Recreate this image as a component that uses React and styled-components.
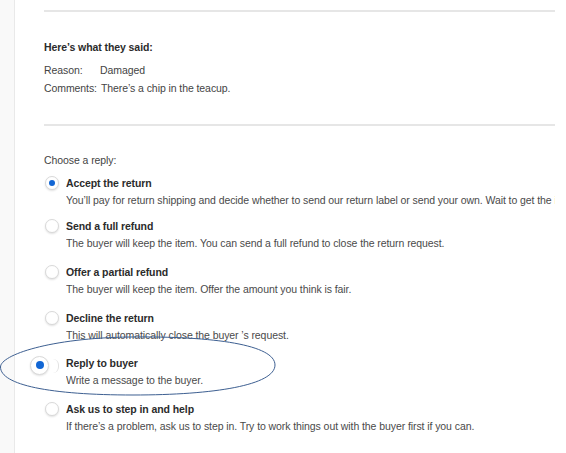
import styled, { createGlobalStyle } from "styled-components";

const GlobalStyle = createGlobalStyle`
  html, body {
    margin: 0;
    padding: 0;
    background: #ffffff;
  }
  body {
    font-family: "Liberation Sans", Arial, sans-serif;
    font-size: 10.5px;
    letter-spacing: -0.08px;
    color: #333333;
  }
`;

const Page = styled.div`
  display: flex;
  width: 566px;
  height: 453px;
  overflow: hidden;
  position: relative;
`;

const SideStrip = styled.div`
  width: 14px;
  flex-shrink: 0;
  background: #f9f9f9;
  border-right: 1px solid #e9e9e9;
`;

const Main = styled.div`
  flex: 1;
  min-width: 0;
  padding: 10px 11px 0 29px;
`;

const Divider = styled.hr`
  margin: 0;
  border: none;
  border-top: 2px solid #e6e6e6;
`;

const Said = styled.section`
  padding: 26px 0 27px;
`;

const Heading = styled.div`
  font-weight: bold;
  line-height: 18px;
  color: #2b2b2b;
  margin-bottom: 5px;
`;

const InfoRow = styled.div`
  display: flex;
  line-height: 18px;
  color: #444;
`;

const InfoLabel = styled.span`
  width: ${(p) => p.width || 56}px;
  flex-shrink: 0;
`;

const Replies = styled.section`
  padding-top: 25px;
`;

const Prompt = styled.div`
  line-height: 18px;
  color: #444;
  margin-bottom: 5px;
`;

const Option = styled.div`
  display: flex;
  align-items: flex-start;
  margin-bottom: ${(p) => p.gap}px;
  margin-left: ${(p) => (p.big ? "-12px" : "0")};
`;

const RadioCell = styled.div`
  width: ${(p) => (p.big ? "34px" : "22px")};
  height: 18px;
  flex-shrink: 0;
  display: flex;
  align-items: center;
  justify-content: flex-start;
  position: relative;
`;

const Radio = styled.span`
  box-sizing: border-box;
  flex-shrink: 0;
  width: ${(p) => (p.big ? "19px" : "14px")};
  height: ${(p) => (p.big ? "19px" : "14px")};
  margin-left: ${(p) => (p.big ? "-2px" : "1px")};
  margin-top: ${(p) => (p.big ? "4px" : "0")};
  border-radius: 50%;
  border: 1px solid #d9d9d9;
  background: #fff;
  box-shadow: 0 1px 2px rgba(0, 0, 0, 0.12);
  display: flex;
  align-items: center;
  justify-content: center;

  &::after {
    content: "";
    width: ${(p) => (p.big ? "8px" : "6px")};
    height: ${(p) => (p.big ? "8px" : "6px")};
    border-radius: 50%;
    background: #1266d4;
    display: ${(p) => (p.checked ? "block" : "none")};
  }
`;

const Ghost = styled.span`
  position: absolute;
  left: 21px;
  top: 5px;
  width: 5px;
  height: 14px;
  border-right: 1px solid #e2e2e2;
  border-radius: 0 10px 10px 0;
`;

const OptionText = styled.div`
  flex: 1;
  min-width: 0;
  overflow: hidden;
  display: flex;
  flex-direction: column;
  white-space: nowrap;
`;

const Title = styled.div`
  font-weight: bold;
  line-height: 18px;
  color: #2b2b2b;
`;

const Desc = styled.div`
  line-height: 17px;
  color: #4a4a4a;
`;

const Highlight = styled.svg`
  position: absolute;
  left: 0;
  top: 0;
  pointer-events: none;
`;

const options = [
  {
    title: "Accept the return",
    desc: "You’ll pay for return shipping and decide whether to send our return label or send your own. Wait to get the item back",
    checked: true,
    gap: 8,
  },
  {
    title: "Send a full refund",
    desc: "The buyer will keep the item. You can send a full refund to close the return request.",
    gap: 11,
  },
  {
    title: "Offer a partial refund",
    desc: "The buyer will keep the item. Offer the amount you think is fair.",
    gap: 11,
  },
  {
    title: "Decline the return",
    desc: "This will automatically close the buyer ’s request.",
    gap: 10,
  },
  {
    title: "Reply to buyer",
    desc: "Write a message to the buyer.",
    checked: true,
    big: true,
    gap: 11,
  },
  {
    title: "Ask us to step in and help",
    desc: "If there’s a problem, ask us to step in. Try to work things out with the buyer first if you can.",
    gap: 0,
  },
];

export default function App() {
  return (
    <>
      <GlobalStyle />
      <Page>
        <SideStrip />
        <Main>
          <Divider />
          <Said>
            <Heading>Here’s what they said:</Heading>
            <InfoRow>
              <InfoLabel>Reason:</InfoLabel>
              <span>Damaged</span>
            </InfoRow>
            <InfoRow>
              <InfoLabel width={57}>Comments:</InfoLabel>
              <span>There’s a chip in the teacup.</span>
            </InfoRow>
          </Said>
          <Divider />
          <Replies>
            <Prompt>Choose a reply:</Prompt>
            {options.map((o) => (
              <Option key={o.title} big={o.big} gap={o.gap}>
                <RadioCell big={o.big}>
                  <Radio checked={o.checked} big={o.big} />
                  {o.big && <Ghost />}
                </RadioCell>
                <OptionText>
                  <Title>{o.title}</Title>
                  <Desc>{o.desc}</Desc>
                </OptionText>
              </Option>
            ))}
          </Replies>
        </Main>
        <Highlight width="566" height="453" viewBox="0 0 566 453">
          <path
            d="M 0.5 367 C 0.5 355 50 338 130 337 C 215 336 275 345 275 365 C 275 385 215 395 133 395 C 50 395 0.5 385 0.5 367 Z"
            fill="none"
            stroke="#3d5f91"
            strokeWidth="1"
          />
        </Highlight>
      </Page>
    </>
  );
}
